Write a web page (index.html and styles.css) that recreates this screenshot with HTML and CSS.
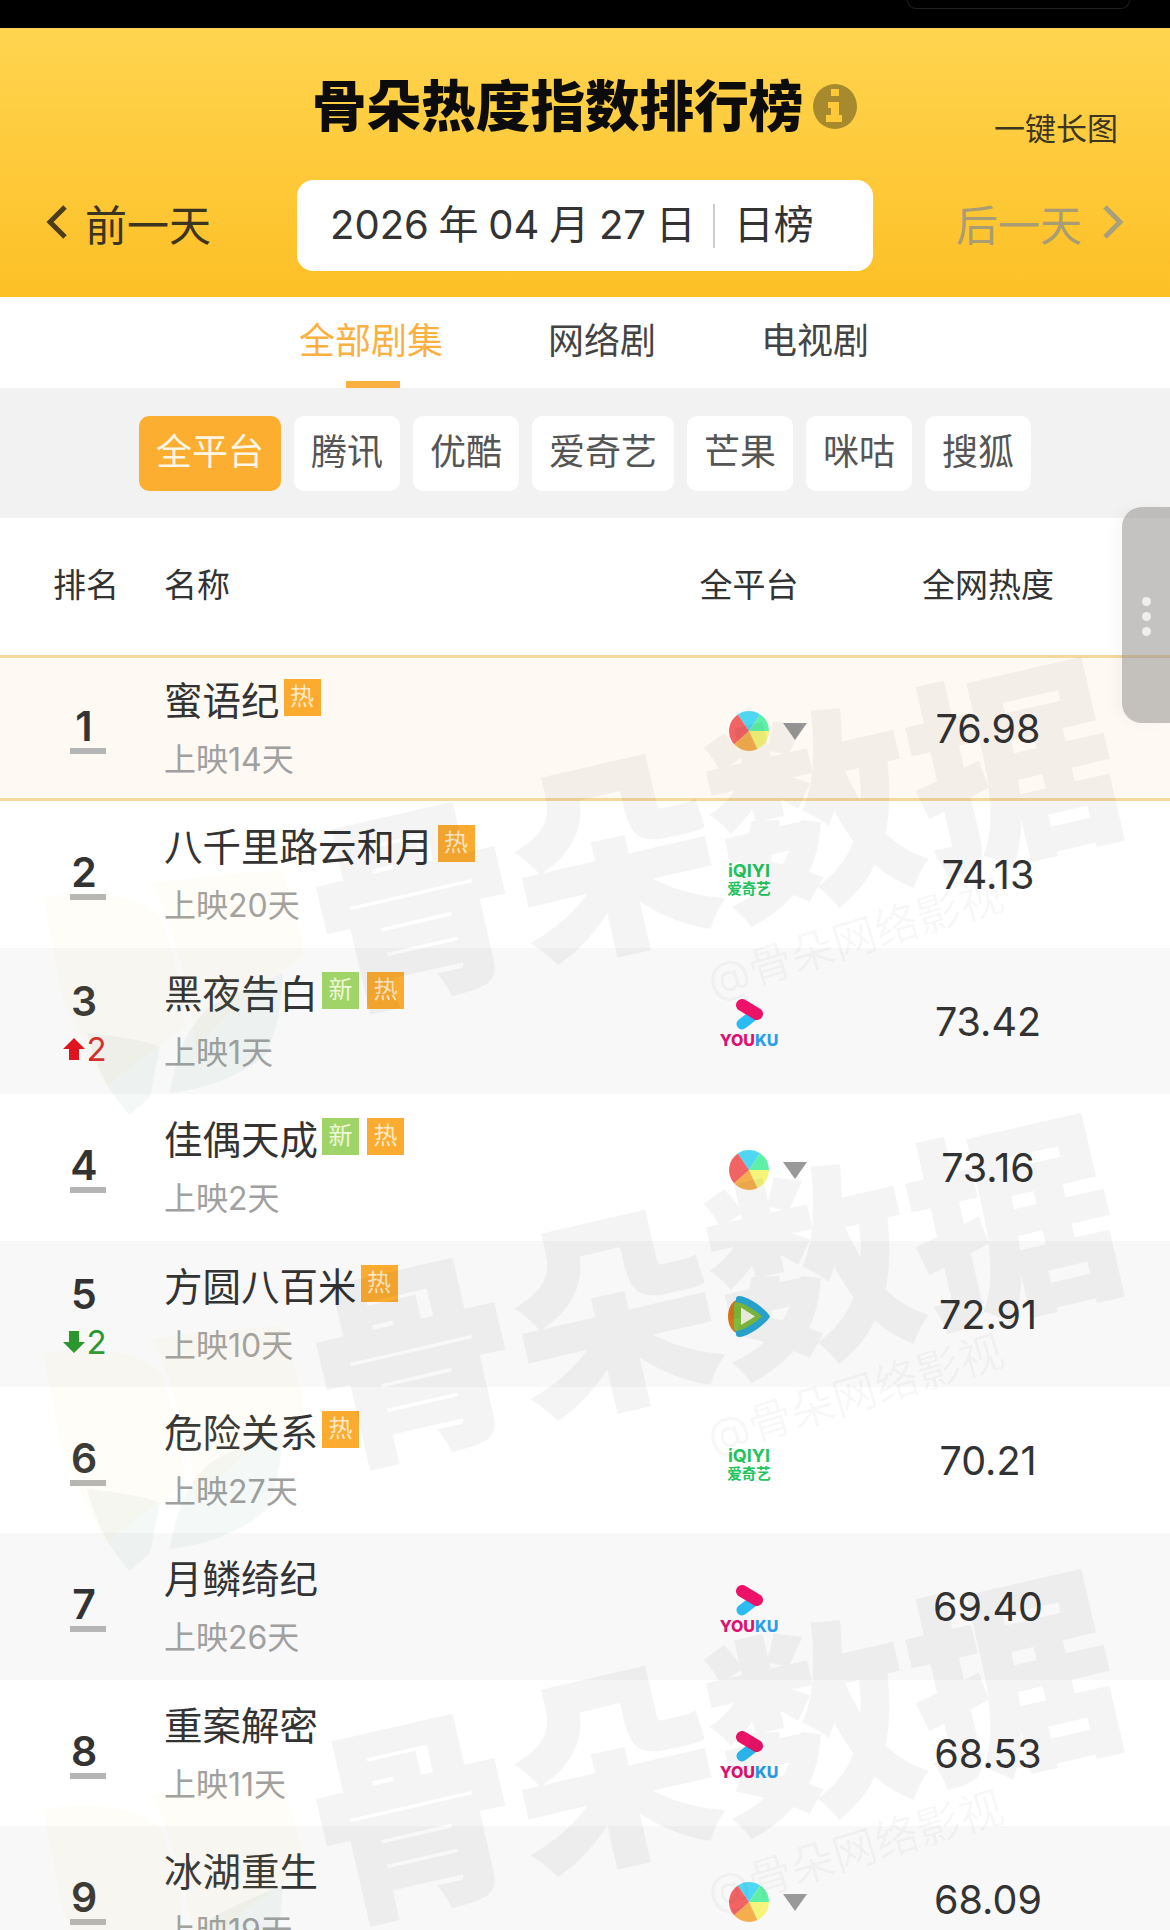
FILE: index.html
```html
<!DOCTYPE html>
<html>
<head>
    <title>骨朵热度指数排行榜</title>
    <link rel="stylesheet" href="styles.css">
</head>
<body>
    <div class="page">
        <div class="status-bar"><div class="notch"></div></div>

        <div class="banner">
            <div class="title-row">
                <h1 class="title">骨朵热度指数排行榜</h1>
                <svg class="info" viewBox="0 0 44 45">
                    <ellipse cx="22" cy="22.5" rx="22" ry="22.5" fill="#a88a2e"/>
                    <path fill="#ffc93a" d="M18 5h8v7h-8zM15 18h11v13h3v7H13v-7h5v-7h-3z"/>
                </svg>
                <div class="long-pic">一键长图</div>
            </div>
            <div class="date-row">
                <div class="day-nav">
                    <svg class="chevron" viewBox="0 0 22 34"><path d="M19 2 4 17l15 15" fill="none" stroke="#4a3d18" stroke-width="5"/></svg>
                    <span>前一天</span>
                </div>
                <div class="date-box">
                    <span class="date-text">2026 年 04 月 27 日</span>
                    <i class="date-line"></i>
                    <span>日榜</span>
                </div>
                <div class="day-nav day-nav-next">
                    <span>后一天</span>
                    <svg class="chevron" viewBox="0 0 22 34"><path d="M3 2l15 15L3 32" fill="none" stroke="#a8a07c" stroke-width="5"/></svg>
                </div>
            </div>
        </div>

        <div class="tabs">
            <div class="tab active">全部剧集</div>
            <div class="tab">网络剧</div>
            <div class="tab">电视剧</div>
        </div>

        <div class="filters">
            <div class="filter active">全平台</div>
            <div class="filter">腾讯</div>
            <div class="filter">优酷</div>
            <div class="filter">爱奇艺</div>
            <div class="filter">芒果</div>
            <div class="filter">咪咕</div>
            <div class="filter">搜狐</div>
        </div>

        <div class="table-head">
            <div class="head-rank">排名</div>
            <div>名称</div>
            <div class="center">全平台</div>
            <div class="center">全网热度</div>
        </div>

        <div class="row first">
            <div class="rank"><b>1</b><i class="flat"></i></div>
            <div class="info-cell">
                <div class="name">蜜语纪<span class="tag hot">热</span></div>
                <div class="days">上映14天</div>
            </div>
            <div class="platform">
                <svg class="pie" viewBox="0 0 38 38"><use href="#pie"/></svg><i class="more"></i>
            </div>
            <div class="score">76.98</div>
        </div>

        <div class="row">
            <div class="rank"><b>2</b><i class="flat"></i></div>
            <div class="info-cell">
                <div class="name">八千里路云和月<span class="tag hot">热</span></div>
                <div class="days">上映20天</div>
            </div>
            <div class="platform"><div class="iqiyi"><span>iQIYI</span><span class="iqiyi-cn">爱奇艺</span></div></div>
            <div class="score">74.13</div>
        </div>

        <div class="row grey">
            <div class="rank moved"><b>3</b>
                <div class="change up"><svg viewBox="0 0 22 22"><path d="M11 0l11 11h-6v11H6V11H0z"/></svg>2</div>
            </div>
            <div class="info-cell">
                <div class="name">黑夜告白<span class="tag new">新</span><span class="tag hot">热</span></div>
                <div class="days">上映1天</div>
            </div>
            <div class="platform">
                <div class="youku">
                    <svg viewBox="0 0 28 31"><use href="#youku"/></svg>
                    <div class="youku-text">YOU<span>KU</span></div>
                </div>
            </div>
            <div class="score">73.42</div>
        </div>

        <div class="row">
            <div class="rank"><b>4</b><i class="flat"></i></div>
            <div class="info-cell">
                <div class="name">佳偶天成<span class="tag new">新</span><span class="tag hot">热</span></div>
                <div class="days">上映2天</div>
            </div>
            <div class="platform">
                <svg class="pie" viewBox="0 0 38 38"><use href="#pie"/></svg><i class="more"></i>
            </div>
            <div class="score">73.16</div>
        </div>

        <div class="row grey">
            <div class="rank moved"><b>5</b>
                <div class="change down"><svg viewBox="0 0 22 22"><path d="M11 22L0 11h6V0h10v11h6z"/></svg>2</div>
            </div>
            <div class="info-cell">
                <div class="name">方圆八百米<span class="tag hot">热</span></div>
                <div class="days">上映10天</div>
            </div>
            <div class="platform">
                <svg class="tencent" viewBox="0 0 42 41">
                    <path fill="#d9751c" d="M8 4C3 7 0 13 0 20.500S3 34 8 37l8-8V12z"/>
                    <path fill="#2aa8d4" d="M11 0c9 0 27 13 31 20.500C38 28 20 41 11 41c-2 0-3-1-3-3V3c0-2 1-3 3-3z"/>
                    <path fill="#7fbb3c" d="M9 6c7 1 21 10 25 14.500C30 25 16 34 9 35c-2 0-3-1-3-3V9c0-2 1-3 3-3z"/>
                    <path fill="#f2f3e2" d="M13 11.500l14 9-14 8.500z"/>
                </svg>
            </div>
            <div class="score">72.91</div>
        </div>

        <div class="row">
            <div class="rank"><b>6</b><i class="flat"></i></div>
            <div class="info-cell">
                <div class="name">危险关系<span class="tag hot">热</span></div>
                <div class="days">上映27天</div>
            </div>
            <div class="platform"><div class="iqiyi"><span>iQIYI</span><span class="iqiyi-cn">爱奇艺</span></div></div>
            <div class="score">70.21</div>
        </div>

        <div class="row grey">
            <div class="rank"><b>7</b><i class="flat"></i></div>
            <div class="info-cell">
                <div class="name">月鳞绮纪</div>
                <div class="days">上映26天</div>
            </div>
            <div class="platform">
                <div class="youku">
                    <svg viewBox="0 0 28 31"><use href="#youku"/></svg>
                    <div class="youku-text">YOU<span>KU</span></div>
                </div>
            </div>
            <div class="score">69.40</div>
        </div>

        <div class="row">
            <div class="rank"><b>8</b><i class="flat"></i></div>
            <div class="info-cell">
                <div class="name">重案解密</div>
                <div class="days">上映11天</div>
            </div>
            <div class="platform">
                <div class="youku">
                    <svg viewBox="0 0 28 31"><use href="#youku"/></svg>
                    <div class="youku-text">YOU<span>KU</span></div>
                </div>
            </div>
            <div class="score">68.53</div>
        </div>

        <div class="row grey">
            <div class="rank"><b>9</b><i class="flat"></i></div>
            <div class="info-cell">
                <div class="name">冰湖重生</div>
                <div class="days">上映19天</div>
            </div>
            <div class="platform">
                <svg class="pie" viewBox="0 0 38 38"><use href="#pie"/></svg><i class="more"></i>
            </div>
            <div class="score">68.09</div>
        </div>

        <!-- watermark sits over the list, repeats every 456px -->
        <div class="watermarks">
            <div class="wm-tile">
                <svg class="wm-leaf" viewBox="0 0 260 270"><use href="#leaf"/></svg>
                <div class="wm-big">骨朵数据</div>
                <div class="wm-small">@骨朵网络影视</div>
            </div>
            <div class="wm-tile">
                <svg class="wm-leaf" viewBox="0 0 260 270"><use href="#leaf"/></svg>
                <div class="wm-big">骨朵数据</div>
                <div class="wm-small">@骨朵网络影视</div>
            </div>
            <div class="wm-tile">
                <svg class="wm-leaf" viewBox="0 0 260 270"><use href="#leaf"/></svg>
                <div class="wm-big">骨朵数据</div>
                <div class="wm-small">@骨朵网络影视</div>
            </div>
        </div>

        <div class="side-handle"><i></i><i></i><i></i></div>
    </div>

    <svg class="defs" width="0" height="0">
        <defs>
            <g id="pie">
                <path fill="#4fd6f2" d="M19 19L8.400 3.250A19 19 0 0 1 29.600 3.250z"/>
                <path fill="#5ff0a8" d="M19 19L29.600 3.250A19 19 0 0 1 38 19z"/>
                <path fill="#f4f57a" d="M19 19H38A19 19 0 0 1 27 36.200z"/>
                <path fill="#f5ae4e" d="M19 19L27 36.200A19 19 0 0 1 4.900 31.700z"/>
                <path fill="#f26363" d="M19 19L4.900 31.700A19 19 0 0 1 8.400 3.250z"/>
            </g>
            <g id="youku" fill="none" stroke-linecap="round">
                <path stroke="#2bbcf5" stroke-width="11" d="M20 15L7 25"/>
                <path stroke="#ec1268" stroke-width="12" d="M7 6l15 9"/>
            </g>
            <g id="leaf">
                <path fill="#f6d878" fill-opacity=".05" d="M0 27C40 20 90 22 118 47c14 40 20 70 24 110L62 216 20 130z"/>
                <path fill="#f6d878" fill-opacity=".05" d="M110 13c40-5 80-10 130-13l23 84-60 43-50 50c-6-60-20-110-43-164z"/>
                <path fill="#3f8f63" fill-opacity=".06" d="M44 163c30 3 60 8 73 14l-10 50-20 18c-20-20-35-50-43-82z"/>
                <path fill="#3f8f63" fill-opacity=".06" d="M127 223c6-40 20-70 40-86 20-12 50-24 73-34-2 40-8 60-16 80-20 20-60 36-97 40z"/>
            </g>
        </defs>
    </svg>
</body>
</html>
```

FILE: styles.css
```css
* {
    box-sizing: border-box;
}

body {
    margin: 0;
    font-family: Inter, "Noto Sans CJK SC", sans-serif;
    color: #333;
    background: #fff;
}

.page {
    position: relative;
    width: 1170px;
    height: 1930px;
    overflow: hidden;
}

.defs {
    position: absolute;
}

.status-bar {
    height: 28px;
    background: #000;
    display: flex;
    justify-content: flex-end;
    padding-right: 40px;
}

.notch {
    width: 223px;
    height: 9px;
    border: 1px solid #1f1f1f;
    border-top: 0;
    border-radius: 0 0 18px 18px;
}

/* yellow banner */
.banner {
    height: 269px;
    padding-top: 50px;
    background: linear-gradient(#ffd44f, #fdc026);
}

.title-row {
    display: flex;
    align-items: center;
    height: 56px;
    padding: 0 52px 0 312px;
}

.title {
    margin: 0;
    font-size: 54.600px;
    line-height: 56px;
    font-weight: 900;
    color: #0c0c0c;
}

.info {
    width: 44px;
    height: 45px;
    margin-left: 10px;
}

.long-pic {
    margin-left: auto;
    align-self: flex-end;
    font-size: 31px;
    line-height: 36px;
    margin-bottom: -13px;
    color: #3c3520;
}

.date-row {
    display: grid;
    grid-template-columns: 297px 576px 297px;
    margin-top: 46px;
    height: 91px;
}

.day-nav {
    display: flex;
    align-items: center;
    gap: 17px;
    padding: 0 0 7px 46px;
    font-size: 42px;
    color: #3b3420;
}

.day-nav-next {
    justify-content: flex-end;
    gap: 20px;
    padding: 0 46px 7px 0;
    color: #a89c74;
}

.chevron {
    width: 22px;
    height: 34px;
}

.date-box {
    display: flex;
    align-items: center;
    padding: 0 0 7px 33px;
    background: #fff;
    border-radius: 16px;
    font-size: 40px;
    color: #333;
}

.date-text {
    white-space: nowrap;
    word-spacing: -1.500px;
}

.date-line {
    width: 2px;
    height: 44px;
    margin: 7px 19px 0 17px;
    background: #ccc;
}

/* tabs */
.tabs {
    display: flex;
    gap: 105px;
    height: 91px;
    padding-left: 299px;
}

.tab {
    position: relative;
    font-size: 36px;
    line-height: 88px;
    color: #444;
}

.tab.active {
    color: #fbb040;
}

.tab.active::after {
    content: "";
    position: absolute;
    left: 47px;
    bottom: 0;
    width: 54px;
    height: 7px;
    background: #fbb040;
}

/* platform filter */
.filters {
    display: flex;
    gap: 13px;
    height: 130px;
    padding: 28px 0 0 139px;
    background: #f2f2f2;
}

.filter {
    height: 75px;
    padding: 0 17px;
    background: #fff;
    border-radius: 10px;
    font-size: 36px;
    line-height: 72px;
    color: #555;
}

.filter.active {
    background: #fbae2f;
    color: #fff6e4;
}

/* table */
.table-head,
.row {
    display: grid;
    grid-template-columns: 164px 500px 170px 308px;
}

.table-head {
    height: 137px;
    padding-bottom: 7px;
    align-items: center;
    font-size: 33px;
    color: #333;
}

.head-rank {
    padding-left: 53px;
}

.center {
    text-align: center;
}

.row {
    height: 146.400px;
}

.row.grey {
    background: #f8f8f8;
}

.row.first {
    background: #fef9f2;
    box-shadow: inset 0 3px #f6d79c, inset 0 -3px #f6d79c;
}

.rank {
    display: flex;
    flex-direction: column;
    align-items: center;
    padding: 50px 0 0 4px;
}

.rank b {
    font-size: 41px;
    line-height: 42px;
    font-weight: 600;
    color: #333;
}

.rank.moved {
    padding-top: 32px;
}

.flat {
    width: 36px;
    height: 6px;
    margin: 1px 0 0 8px;
    background: #b5b5b5;
}

.change {
    display: flex;
    align-items: center;
    gap: 1px;
    margin: 8px 0 0 2px;
    font-size: 33px;
    line-height: 38px;
}

.change svg {
    width: 22px;
    height: 22px;
}

.change.up {
    color: #d8252c;
}

.change.up svg {
    fill: #e0141e;
}

.change.down {
    color: #2a962e;
}

.change.down svg {
    fill: #2a962e;
}

.info-cell {
    padding-top: 23px;
}

.name {
    display: flex;
    gap: 4px;
    align-items: flex-start;
    font-size: 38.500px;
    line-height: 46px;
    color: #333;
}

.tag {
    width: 37px;
    height: 37px;
    margin-top: 1px;
    font-size: 24px;
    line-height: 36px;
    text-align: center;
    color: #ffe9c4;
}

.tag + .tag {
    margin-left: 4px;
}

.tag.hot {
    background: #fbab30;
}

.tag.new {
    background: #a0d468;
    color: #eef8d8;
}

.days {
    margin-top: 16px;
    font-size: 32px;
    line-height: 40px;
    color: #a0a0a0;
}

.platform {
    display: flex;
    align-items: center;
    justify-content: center;
    padding-top: 6px;
}

.pie {
    width: 40px;
    height: 40px;
    margin-left: 37px;
}

.more {
    width: 0;
    height: 0;
    margin-left: 14px;
    border-style: solid;
    border-width: 17px 12.500px 0;
    border-color: #999 transparent transparent;
}

.iqiyi {
    display: flex;
    flex-direction: column;
    align-items: center;
    margin-top: 4px;
    font-size: 18px;
    line-height: 18px;
    font-weight: 700;
    color: #22c45e;
}

.iqiyi-cn {
    font-size: 14.500px;
}

.youku {
    display: flex;
    flex-direction: column;
    align-items: center;
}

.youku svg {
    display: block;
    width: 28px;
    height: 31px;
}

.youku-text {
    margin-top: 1px;
    font-size: 16px;
    line-height: 18px;
    font-weight: 800;
    color: #de1170;
}

.youku-text span {
    color: #2a9fe8;
}

.tencent {
    width: 42px;
    height: 41px;
}

.score {
    padding-top: 51px;
    font-size: 39.500px;
    line-height: 46px;
    text-align: center;
    color: #333;
}

/* overlays */
.watermarks {
    position: absolute;
    left: 0;
    top: 0;
    width: 100%;
    pointer-events: none;
}

.wm-tile {
    position: relative;
    height: 456px;
}

.wm-leaf {
    position: absolute;
    left: 43px;
    top: 870px;
    width: 260px;
    height: 270px;
}

.wm-big {
    position: absolute;
    left: 714px;
    top: 838px;
    transform: translate(-50%, -50%) rotate(-13deg);
    font-size: 205px;
    line-height: 1;
    font-weight: 900;
    white-space: nowrap;
    color: #000;
    -webkit-text-stroke: 2px #000;
    opacity: .04;
}

.wm-small {
    position: absolute;
    left: 855px;
    top: 938px;
    transform: translate(-50%, -50%) rotate(-17deg);
    font-size: 44px;
    line-height: 1;
    white-space: nowrap;
    color: rgba(0, 0, 0, .04);
}

.side-handle {
    position: absolute;
    right: 0;
    top: 507px;
    width: 48px;
    height: 216px;
    display: flex;
    flex-direction: column;
    align-items: center;
    justify-content: center;
    gap: 6px;
    padding-top: 2px;
    border-radius: 20px 0 0 20px;
    background: rgba(148, 146, 144, .55);
    box-shadow: -6px 0 14px rgba(0, 0, 0, .03);
}

.side-handle i {
    width: 9px;
    height: 9px;
    border-radius: 50%;
    background: #eee;
}
```
